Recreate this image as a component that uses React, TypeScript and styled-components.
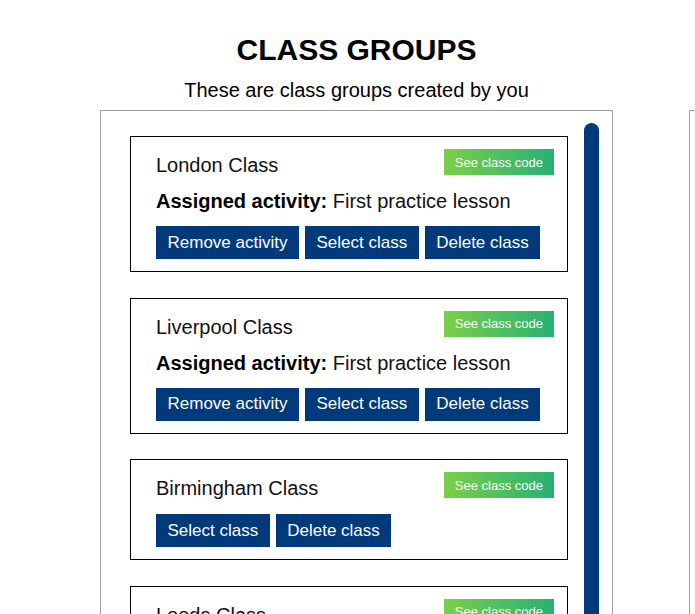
import styled, { createGlobalStyle } from "styled-components";

const GlobalStyle = createGlobalStyle`
  html, body {
    margin: 0;
    padding: 0;
    overflow: hidden;
    background: #ffffff;
    font-family: "Liberation Sans", Arial, sans-serif;
    color: #000000;
  }
`;

const Page = styled.div`
  display: flex;
  align-items: flex-start;
  gap: 76px;
  padding: 32px 0 0 100px;
`;

const Column = styled.section`
  flex: 0 0 513px;
  display: flex;
  flex-direction: column;
  align-items: stretch;
`;

const Title = styled.h1`
  margin: 0;
  font-size: 30px;
  font-weight: 700;
  line-height: 35px;
  text-align: center;
`;

const Subtitle = styled.p`
  margin: 12px 0 8px;
  font-size: 20px;
  line-height: 23px;
  text-align: center;
`;

const Panel = styled.div`
  display: flex;
  align-items: stretch;
  border: 1px solid #a0a0a0;
  padding: 12px 13px 12px 12px;
  height: 640px;
`;

const List = styled.div`
  flex: 1;
  min-width: 0;
  overflow-y: auto;
  scrollbar-width: none;
  box-sizing: border-box;
  padding: 13px 16px 13px 17px;
  display: flex;
  flex-direction: column;
  gap: 25.5px;
`;

const ScrollTrack = styled.div`
  flex: 0 0 15px;
  display: flex;
  flex-direction: column;
`;

const ScrollThumb = styled.div`
  background: #003a7a;
  border-radius: 8px;
`;

const Card = styled.div`
  flex-shrink: 0;
  border: 1px solid #000000;
  padding: 12px 13px 12px 25px;
`;

const CardHeader = styled.div`
  display: flex;
  justify-content: space-between;
  align-items: flex-start;
`;

const ClassName = styled.div`
  margin-top: 5px;
  font-size: 20px;
  line-height: 23px;
  color: #111111;
`;

const CodeButton = styled.button`
  height: 26px;
  padding: 0 11px;
  border: none;
  background: linear-gradient(to right, #7bcf47, #27b175);
  color: #ffffff;
  font-family: "Liberation Sans", Arial, sans-serif;
  font-size: 13px;
  cursor: pointer;
`;

const Activity = styled.div`
  margin-top: 13px;
  font-size: 20px;
  line-height: 23px;
  color: #111111;

  b {
    font-weight: 700;
    color: #000000;
  }
`;

const Actions = styled.div<{ $afterActivity?: boolean }>`
  display: flex;
  gap: 6px;
  margin-top: ${({ $afterActivity }) => ($afterActivity ? "13px" : "14px")};
`;

const ActionButton = styled.button`
  height: 33px;
  padding: 0 11.5px;
  border: none;
  background: #003a7a;
  color: #ffffff;
  font-family: "Liberation Sans", Arial, sans-serif;
  font-size: 17px;
  cursor: pointer;
`;

const ActivityRow = styled.div`
  flex-shrink: 0;
  border: 1px solid #000000;
  padding: 14px 25px;
  font-size: 20px;
`;

type ClassGroup = { name: string; activity?: string };

const groups: ClassGroup[] = [
  { name: "London Class", activity: "First practice lesson" },
  { name: "Liverpool Class", activity: "First practice lesson" },
  { name: "Birmingham Class" },
  { name: "Leeds Class", activity: "Second practice lesson" },
  { name: "Manchester Class" },
];

const activities = ["First practice lesson", "Second practice lesson", "Vocabulary quiz", "Listening test"];

// share of the list that is visible, used for the thumb length
const visibleShare = 0.86;

function ClassCard({ group }: { group: ClassGroup }) {
  return (
    <Card>
      <CardHeader>
        <ClassName>{group.name}</ClassName>
        <CodeButton>See class code</CodeButton>
      </CardHeader>
      {group.activity && (
        <Activity>
          <b>Assigned activity:</b> {group.activity}
        </Activity>
      )}
      <Actions $afterActivity={!!group.activity}>
        {group.activity && <ActionButton>Remove activity</ActionButton>}
        <ActionButton>Select class</ActionButton>
        <ActionButton>Delete class</ActionButton>
      </Actions>
    </Card>
  );
}

export default function App() {
  return (
    <>
      <GlobalStyle />
      <Page>
        <Column>
          <Title>CLASS GROUPS</Title>
          <Subtitle>These are class groups created by you</Subtitle>
          <Panel>
            <List>
              {groups.map((g) => (
                <ClassCard key={g.name} group={g} />
              ))}
            </List>
            <ScrollTrack>
              <ScrollThumb style={{ height: `${visibleShare * 100}%` }} />
            </ScrollTrack>
          </Panel>
        </Column>
        <Column>
          <Title>ACTIVITIES</Title>
          <Subtitle>Choose an activity to assign</Subtitle>
          <Panel>
            <List>
              {activities.map((a) => (
                <ActivityRow key={a}>{a}</ActivityRow>
              ))}
            </List>
          </Panel>
        </Column>
      </Page>
    </>
  );
}
